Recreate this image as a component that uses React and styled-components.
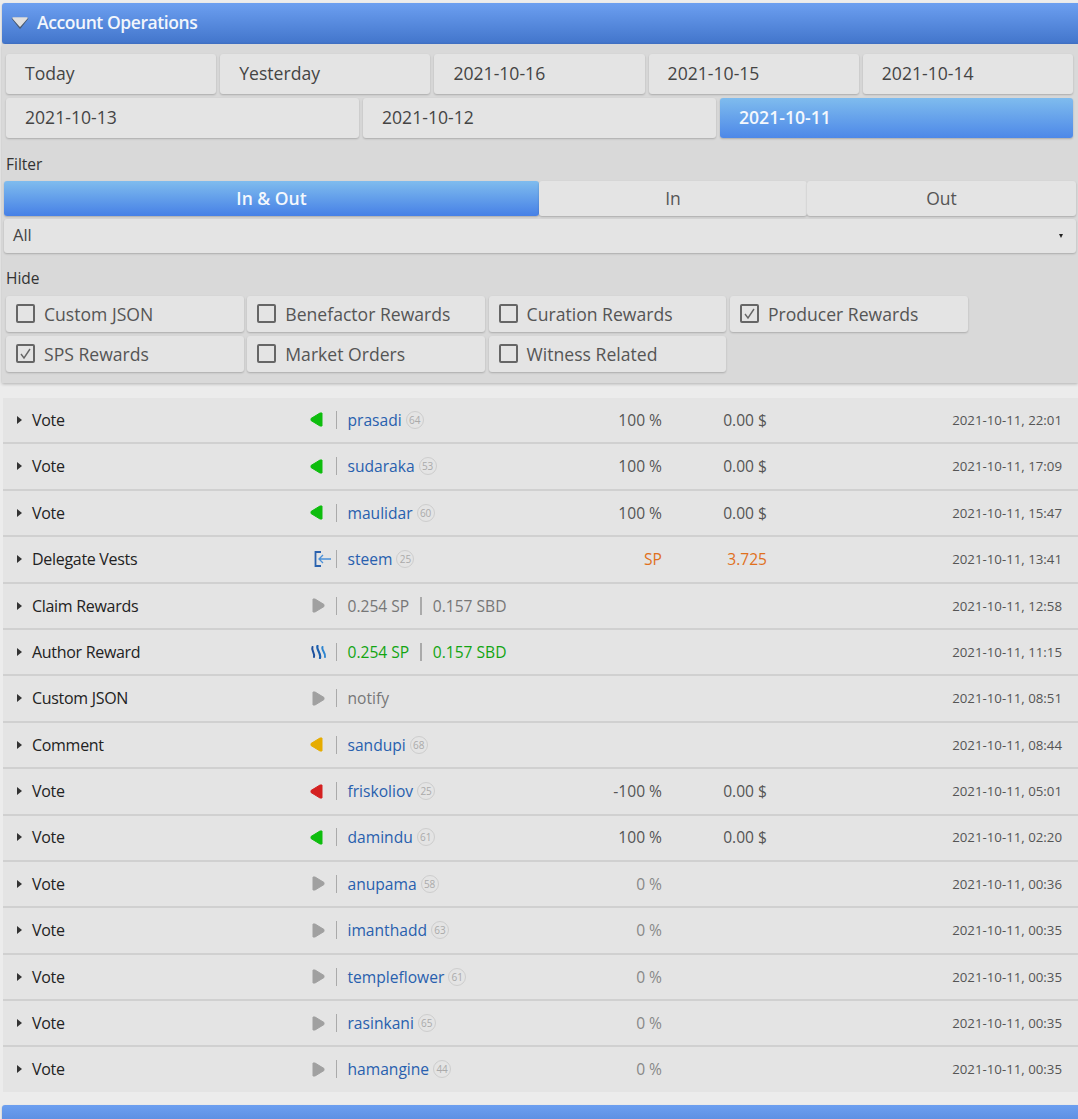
import React from "react";
import styled, { createGlobalStyle } from "styled-components";

const GlobalStyle = createGlobalStyle`
  html, body {
    margin: 0;
    padding: 0;
    height: 1119px;
    overflow: hidden;
    background: #ececec;
    font-family: "Open Sans", "Liberation Sans", sans-serif;
    color: #444;
  }
`;

const Page = styled.div`
  padding: 3px 0 0 2px;
`;

const Header = styled.div`
  display: flex;
  align-items: center;
  gap: 8px;
  height: 41px;
  box-sizing: border-box;
  padding: 0 0 3px 9px;
  margin-top: ${p => p.$gap || 0}px;
  border-radius: 3px 0 0 3px;
  background: linear-gradient(#6c9ff0, #4275cb);
  box-shadow: 0 1px 2px rgba(0, 0, 0, 0.25);
  color: #f2f6fc;
  font-size: 17.5px;
  font-weight: 600;
  letter-spacing: -0.42px;
`;

const Panel = styled.div`
  background: #d9d9d9;
  padding: 10px 0 11px 0;
  box-shadow: 0 1px 3px rgba(0, 0, 0, 0.25);
`;

const DateRow = styled.div`
  display: flex;
  gap: 4px;
  padding: 0 5px 0 4px;
  margin-bottom: 4px;
`;

const DateButton = styled.div`
  flex: 1 1 0;
  height: 40px;
  display: flex;
  align-items: center;
  box-sizing: border-box;
  padding: 0 0 3px 19px;
  border-radius: 3px;
  font-size: 17.6px;
  background: ${p => (p.$active ? "linear-gradient(#7fbcee, #4d88e8)" : "#e4e4e4")};
  color: ${p => (p.$active ? "#f4f8fd" : "#444")};
  font-weight: ${p => (p.$active ? 600 : 400)};
  box-shadow: 0 1px 2px rgba(0, 0, 0, 0.22);
`;

const Label = styled.div`
  height: 22px;
  line-height: 22px;
  margin-top: ${p => p.$gap || 0}px;
  padding-left: 4px;
  font-size: 15.5px;
  color: #333;
`;

const Segments = styled.div`
  display: grid;
  grid-template-columns: 535px 268px 269px;
  height: 35px;
  margin: 6px 0 3px 2px;
  width: 1072px;
`;

const Segment = styled.div`
  display: flex;
  align-items: center;
  justify-content: center;
  box-sizing: border-box;
  padding-bottom: 2px;
  font-size: 17.5px;
  border-radius: 3px;
  background: ${p => (p.$active ? "linear-gradient(#7fbcee, #4680e6)" : "#e4e4e4")};
  color: ${p => (p.$active ? "#f4f8fd" : "#555")};
  font-weight: ${p => (p.$active ? 600 : 400)};
  box-shadow: 0 1px 2px rgba(0, 0, 0, 0.22);
`;

const Select = styled.div`
  display: flex;
  align-items: center;
  justify-content: space-between;
  width: 1072px;
  height: 34px;
  margin: 0 0 14px 2px;
  padding: 0 13px 3px 9px;
  box-sizing: border-box;
  background: #e4e4e4;
  border-radius: 3px;
  font-size: 16.5px;
  color: #444;
  box-shadow: 0 1px 2px rgba(0, 0, 0, 0.22);
`;

const SelectArrow = styled.span`
  width: 0;
  height: 0;
  margin-top: 3px;
  border-left: 2.5px solid transparent;
  border-right: 2.5px solid transparent;
  border-top: 4px solid #222;
`;

const Checks = styled.div`
  display: grid;
  grid-template-columns: repeat(4, 237.8px);
  gap: 4px 3.5px;
  margin: 7px 0 0 4px;
`;

const Check = styled.div`
  display: flex;
  align-items: center;
  gap: 9px;
  height: 36px;
  box-sizing: border-box;
  padding: 0 0 1px 10px;
  border-radius: 3px;
  background: #e4e4e4;
  font-size: 17.6px;
  color: #555;
  box-shadow: 0 1px 2px rgba(0, 0, 0, 0.22);
`;

const Box = styled.span`
  width: 19px;
  height: 19px;
  box-sizing: border-box;
  border: 2px solid #666;
  border-radius: 2px;
  display: flex;
  align-items: center;
  justify-content: center;
`;

const List = styled.div`
  margin: 15px 0 0 1px;
  background: #e4e4e4;
  height: 694px;
`;

const Row = styled.div`
  display: grid;
  grid-template-columns: 29px 278px 15px 255px 82px 105px 295px;
  align-items: center;
  height: 46.4px;
  box-sizing: border-box;
  padding-bottom: 0.5px;
  border-bottom: 2px solid ${p => (p.$last ? "transparent" : "#d0d0d0")};
  font-size: 15.6px;
`;

const Caret = styled.span`
  justify-self: start;
  margin-left: 14px;
  width: 0;
  height: 0;
  border-top: 4px solid transparent;
  border-bottom: 4px solid transparent;
  border-left: 5px solid #333;
`;

const OpName = styled.span`
  color: #222;
  font-size: 16px;
  letter-spacing: -0.3px;
`;

const IconCell = styled.span`
  display: flex;
  align-items: center;
  padding-left: ${p => p.$shift || 0}px;
  svg {
    flex-shrink: 0;
  }
`;

const Main = styled.span`
  display: flex;
  align-items: center;
  color: ${p => p.$color || "#777"};
`;

const Bar = styled.span`
  width: 1.5px;
  height: 18px;
  background: #aaa;
  margin: ${p => (p.$inner ? "0 11px" : "0 10.5px")};
`;

const UserName = styled.span`
  color: #2860ae;
`;

const Rep = styled.span`
  width: 18px;
  height: 18px;
  margin-left: 4px;
  border: 1px solid #cdcdcd;
  border-radius: 50%;
  box-sizing: border-box;
  display: flex;
  align-items: center;
  justify-content: center;
  font-size: 10px;
  color: #aaa;
`;

const Num = styled.span`
  text-align: right;
  color: ${p => p.$color || "#555"};
`;

const When = styled.span`
  text-align: right;
  font-size: 13.25px;
  color: #555;
`;

const Arrow = ({ color, left }) => (
  <svg width="13" height="15" viewBox="0 0 13 15">
    <path
      d={left ? "M12 1v13h-2L1 8.500v-2L10 1z" : "M1 1v13h2l9-5.500v-2L3 1z"}
      fill={color}
      stroke={color}
      strokeWidth="1"
      strokeLinejoin="round"
    />
  </svg>
);

const Delegate = () => (
  <svg width="18" height="16" viewBox="0 0 18 16" fill="none">
    <path d="M7 1H1.500v14H7" strokeWidth="1.800" stroke="#2a62ae" />
    <path d="M17 8H5M9 4L5 8l4 4" strokeWidth="1.300" stroke="#4a90d8" />
  </svg>
);

const Steem = () => (
  <svg width="17" height="14" viewBox="0 0 17 14" fill="none" strokeLinecap="round">
    <path d="M2.500 2C1 5 5 8 4 12" stroke="#1d4f9c" strokeWidth="2" />
    <path d="M7.500 1C6 5 11.500 8 10 13" stroke="#1a5fb0" strokeWidth="2.200" />
    <path d="M12.500 2C11 5 16 8 15 12" stroke="#2f86d0" strokeWidth="2" />
  </svg>
);

const ICONS = {
  green: { shift: 0, node: <Arrow color="#0ebd0e" left /> },
  red: { shift: 0, node: <Arrow color="#d42020" left /> },
  yellow: { shift: 0, node: <Arrow color="#e6ac00" left /> },
  gray: { shift: 2, node: <Arrow color="#a0a0a0" /> },
  delegate: { shift: 4, node: <Delegate /> },
  steem: { shift: 0, node: <Steem /> }
};

const rows = [
  { op: "Vote", icon: "green", user: "prasadi", rep: 64, pct: "100 %", amt: "0.00 $", at: "22:01" },
  { op: "Vote", icon: "green", user: "sudaraka", rep: 53, pct: "100 %", amt: "0.00 $", at: "17:09" },
  { op: "Vote", icon: "green", user: "maulidar", rep: 60, pct: "100 %", amt: "0.00 $", at: "15:47" },
  { op: "Delegate Vests", icon: "delegate", user: "steem", rep: 25, pct: "SP", amt: "3.725", at: "13:41", orange: true },
  { op: "Claim Rewards", icon: "gray", pair: true, at: "12:58" },
  { op: "Author Reward", icon: "steem", pair: true, color: "#12a512", at: "11:15" },
  { op: "Custom JSON", icon: "gray", text: "notify", at: "08:51" },
  { op: "Comment", icon: "yellow", user: "sandupi", rep: 68, at: "08:44" },
  { op: "Vote", icon: "red", user: "friskoliov", rep: 25, pct: "-100 %", amt: "0.00 $", at: "05:01" },
  { op: "Vote", icon: "green", user: "damindu", rep: 61, pct: "100 %", amt: "0.00 $", at: "02:20" },
  { op: "Vote", icon: "gray", user: "anupama", rep: 58, pct: "0 %", at: "00:36" },
  { op: "Vote", icon: "gray", user: "imanthadd", rep: 63, pct: "0 %", at: "00:35" },
  { op: "Vote", icon: "gray", user: "templeflower", rep: 61, pct: "0 %", at: "00:35" },
  { op: "Vote", icon: "gray", user: "rasinkani", rep: 65, pct: "0 %", at: "00:35" },
  { op: "Vote", icon: "gray", user: "hamangine", rep: 44, pct: "0 %", at: "00:35" }
];

const hideOptions = [
  ["Custom JSON", false],
  ["Benefactor Rewards", false],
  ["Curation Rewards", false],
  ["Producer Rewards", true],
  ["SPS Rewards", true],
  ["Market Orders", false],
  ["Witness Related", false]
];

const OperationRow = ({ row, last }) => (
  <Row $last={last}>
    <Caret />
    <OpName>{row.op}</OpName>
    <IconCell $shift={ICONS[row.icon].shift}>{ICONS[row.icon].node}</IconCell>
    <Main $color={row.color}>
      <Bar />
      {row.user && (
        <>
          <UserName>{row.user}</UserName>
          <Rep>{row.rep}</Rep>
        </>
      )}
      {row.pair && (
        <>
          0.254 SP
          <Bar $inner />
          0.157 SBD
        </>
      )}
      {row.text}
    </Main>
    <Num $color={row.orange ? "#e0701c" : row.pct === "0 %" ? "#888" : null}>{row.pct}</Num>
    <Num $color={row.orange ? "#e0701c" : null}>{row.amt}</Num>
    <When>2021-10-11, {row.at}</When>
  </Row>
);

export default function App() {
  return (
    <>
      <GlobalStyle />
      <Page>
        <Header>
          <svg width="18" height="13" viewBox="0 0 18 13">
            <path d="M1.500 2.500h15L9 12z" fill="#4a5a70" stroke="#4a5a70" strokeWidth="1.500" strokeLinejoin="round" />
            <path d="M2 2h14L9 10z" fill="#e0e0e0" stroke="#e0e0e0" strokeWidth="1.500" strokeLinejoin="round" />
          </svg>
          Account Operations
        </Header>
        <Panel>
          <DateRow>
            <DateButton>Today</DateButton>
            <DateButton>Yesterday</DateButton>
            <DateButton>2021-10-16</DateButton>
            <DateButton>2021-10-15</DateButton>
            <DateButton>2021-10-14</DateButton>
          </DateRow>
          <DateRow>
            <DateButton>2021-10-13</DateButton>
            <DateButton>2021-10-12</DateButton>
            <DateButton $active>2021-10-11</DateButton>
          </DateRow>
          <Label $gap={15}>Filter</Label>
          <Segments>
            <Segment $active>In &amp; Out</Segment>
            <Segment>In</Segment>
            <Segment>Out</Segment>
          </Segments>
          <Select>
            All
            <SelectArrow />
          </Select>
          <Label>Hide</Label>
          <Checks>
            {hideOptions.map(([name, checked]) => (
              <Check key={name}>
                <Box>
                  {checked && (
                    <svg width="13" height="13" viewBox="0 0 13 13" fill="none" stroke="#666" strokeWidth="1.400">
                      <path d="M2 7l3 4 6-9" />
                    </svg>
                  )}
                </Box>
                {name}
              </Check>
            ))}
          </Checks>
        </Panel>
        <List>
          {rows.map((row, i) => (
            <OperationRow key={i} row={row} last={i === rows.length - 1} />
          ))}
        </List>
        <Header $gap={13} />
      </Page>
    </>
  );
}
